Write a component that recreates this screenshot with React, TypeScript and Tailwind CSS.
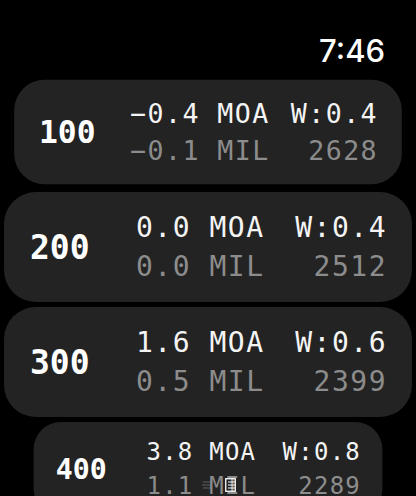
import React from 'react';

type Row = {
  range: string;
  moa: string;
  mil: string;
  wind: string;
  speed: string;
  blockW: string;
  wrap: string;
};

const rows: Row[] = [
  { range: '100', moa: '−0.4', mil: '−0.1', wind: 'W:0.4', speed: '2628', blockW: 'w-[261px]', wrap: 'scale-[0.95]' },
  { range: '200', moa: '0.0', mil: '0.0', wind: 'W:0.4', speed: '2512', blockW: 'w-[251px]', wrap: '' },
  { range: '300', moa: '1.6', mil: '0.5', wind: 'W:0.6', speed: '2399', blockW: 'w-[251px]', wrap: '' },
  { range: '400', moa: '3.8', mil: '1.1', wind: 'W:0.8', speed: '2289', blockW: 'w-[251px]', wrap: 'scale-[0.855] origin-top' },
];

const DopeCard: React.FC<{ row: Row }> = ({ row }) => (
  <div className={`shrink-0 h-[110px] rounded-[32px] bg-[#232323] flex items-center pl-[26px] pr-[25px] ${row.wrap}`}>
    <span className="text-[33px] leading-none font-bold text-white">{row.range}</span>
    <div className={`ml-auto ${row.blockW} text-[28px] leading-[39px] tracking-[1.5px]`}>
      <div className="flex justify-between text-[#f4f4f4]">
        <span>{row.moa} MOA</span>
        <span>{row.wind}</span>
      </div>
      <div className="flex justify-between text-[#8c8c8c]">
        <span>{row.mil} MIL</span>
        <span>{row.speed}</span>
      </div>
    </div>
  </div>
);

export default function App() {
  return (
    <div className="relative w-[416px] h-[496px] overflow-hidden bg-black font-['DejaVu_Sans_Mono',monospace]">
      {/* status bar */}
      <div className="h-[77px] flex justify-end pt-[32px] pr-[31px]">
        <span className="font-['Inter',sans-serif] text-[31px] leading-[37px] font-medium text-white">7:46</span>
      </div>

      <div className="flex flex-col gap-[5px] px-[4px]">
        {rows.map((r) => (
          <DopeCard key={r.range} row={r} />
        ))}
      </div>

      {/* scroll hint icons */}
      <div className="absolute left-[202px] top-[478px] flex items-center gap-[13px]">
        <svg width="10" height="8" viewBox="0 0 10 8" className="opacity-40">
          <path d="M1 1h8M0 4h9M1 7h8" stroke="#bbb" strokeWidth="1.2" />
        </svg>
        <svg width="11" height="14" viewBox="0 0 11 14">
          <rect x="0.75" y="0.75" width="9.5" height="12.5" fill="none" stroke="#fff" strokeWidth="1.3" />
          <path d="M3 4h7M3 7h7M3 10h7" stroke="#fff" strokeWidth="1.2" />
        </svg>
      </div>
    </div>
  );
}
